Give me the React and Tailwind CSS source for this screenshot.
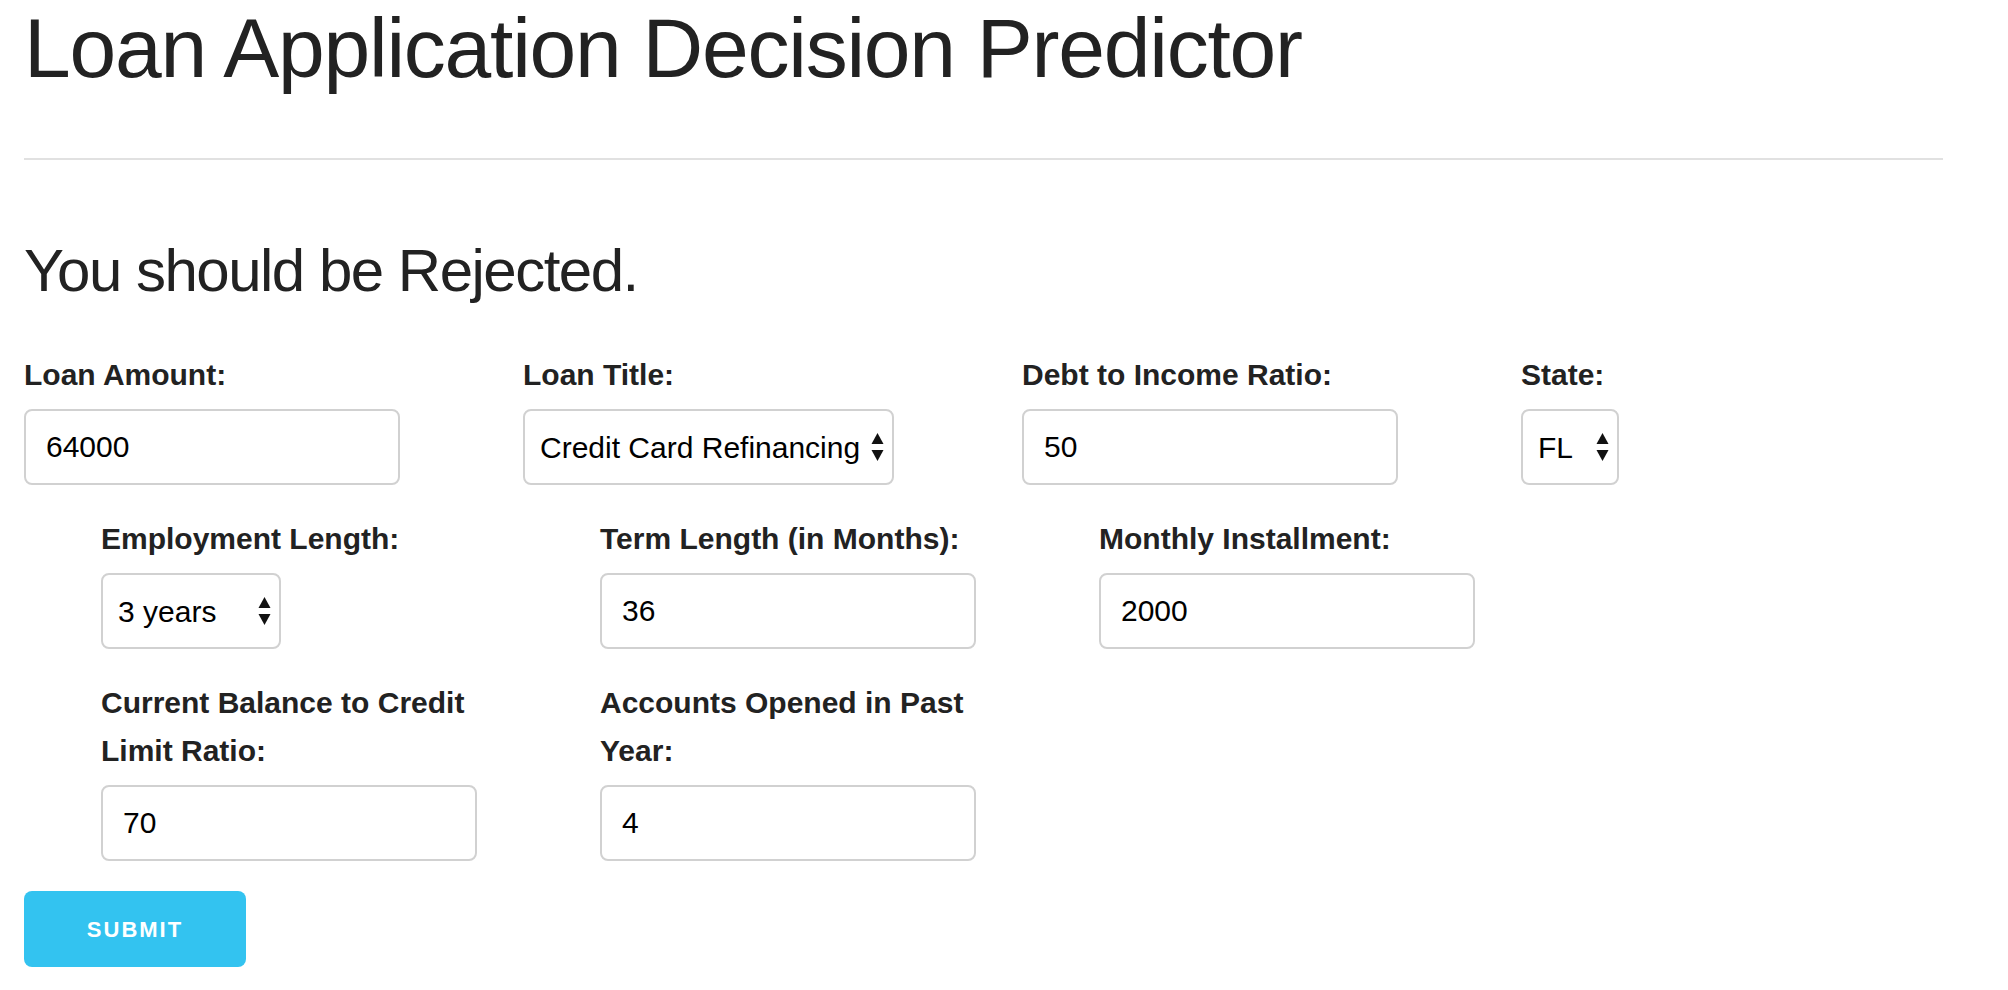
import React from "react";

const Arrows = () => (
  <svg
    className="pointer-events-none absolute right-[10px] top-1/2 -translate-y-1/2"
    width="13"
    height="30"
    viewBox="0 0 13 30"
  >
    <path d="M6.5 1 L12.5 12 L0.5 12 Z" fill="#111" />
    <path d="M0.5 18 L12.5 18 L6.5 29 Z" fill="#111" />
  </svg>
);

const Field = ({ label, children }) => (
  <div className="w-[422px] shrink-0">
    <label className="block text-[30px] leading-[48px] font-bold text-[#222] mb-[10px]">
      {label}
    </label>
    {children}
  </div>
);

const TextInput = ({ value }) => (
  <input
    type="text"
    defaultValue={value}
    className="block h-[76px] w-[376px] mb-[30px] px-[20px] border-2 border-[#D1D1D1] rounded-[8px] bg-white text-[30px] text-black outline-none"
  />
);

const Select = ({ value, options, width }) => (
  <div className={`relative mb-[30px] ${width}`}>
    <select
      defaultValue={value}
      className="block h-[76px] w-full appearance-none pl-[15px] pr-[28px] border-2 border-[#D1D1D1] rounded-[8px] bg-white text-[30px] text-black outline-none"
    >
      {options.map((o) => (
        <option key={o}>{o}</option>
      ))}
    </select>
    <Arrows />
  </div>
);

export default function App() {
  return (
    <div className="min-h-screen bg-white text-[#222] font-['Liberation_Sans',Arial,sans-serif]">
      <div className="w-[1919px] ml-[24px] pt-[6px]">
        <h2 className="text-[84px] leading-[84px] tracking-[-1.25px] font-normal">
          Loan Application Decision Predictor
        </h2>
        <hr className="mt-[68px] border-0 border-t-2 border-[#E1E1E1]" />
        <h4 className="mt-[70px] text-[60px] leading-[81px] tracking-[-1.5px] font-normal">
          You should be Rejected.
        </h4>

        <form className="mt-[40px]">
          {/* row 1 */}
          <div className="flex items-start gap-[77px]">
            <Field label="Loan Amount:">
              <TextInput value="64000" />
            </Field>
            <Field label="Loan Title:">
              <Select
                value="Credit Card Refinancing"
                width="w-[371px]"
                options={[
                  "Credit Card Refinancing",
                  "Debt Consolidation",
                  "Home Improvement",
                  "Other",
                ]}
              />
            </Field>
            <Field label="Debt to Income Ratio:">
              <TextInput value="50" />
            </Field>
            <Field label="State:">
              <Select value="FL" width="w-[98px]" options={["CA", "FL", "NY", "TX"]} />
            </Field>
          </div>

          {/* row 2 */}
          <div className="flex items-start gap-[77px] pl-[77px]">
            <Field label="Employment Length:">
              <Select
                value="3 years"
                width="w-[180px]"
                options={["1 year", "2 years", "3 years", "10+ years"]}
              />
            </Field>
            <Field label="Term Length (in Months):">
              <TextInput value="36" />
            </Field>
            <Field label="Monthly Installment:">
              <TextInput value="2000" />
            </Field>
          </div>

          {/* row 3 */}
          <div className="flex items-start gap-[77px] pl-[77px]">
            <Field label="Current Balance to Credit Limit Ratio:">
              <TextInput value="70" />
            </Field>
            <Field label="Accounts Opened in Past Year:">
              <TextInput value="4" />
            </Field>
          </div>

          <button
            type="button"
            className="h-[76px] w-[222px] rounded-[8px] bg-[#33C3F0] text-white text-[22px] font-bold tracking-[2px] uppercase"
          >
            Submit
          </button>
        </form>
      </div>
    </div>
  );
}
